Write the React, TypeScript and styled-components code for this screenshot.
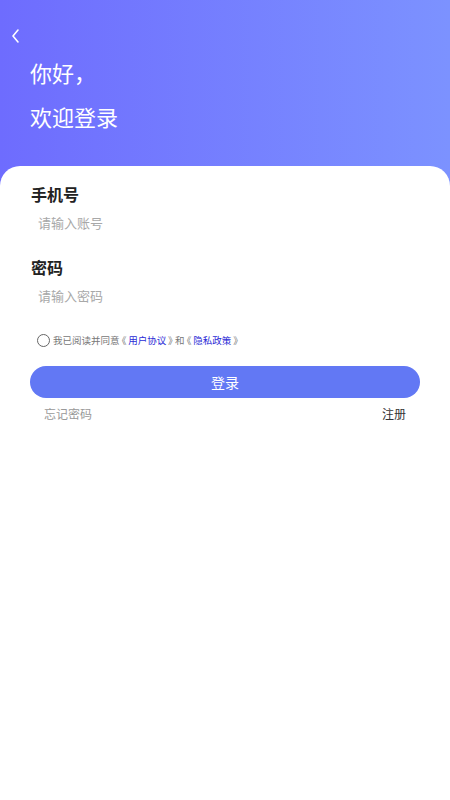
import React, { ReactElement } from "react";
import styled, { createGlobalStyle } from "styled-components";

const GlobalStyle = createGlobalStyle`
  html, body {
    margin: 0;
    padding: 0;
    background: #ffffff;
  }
  body {
    font-family: "Noto Sans CJK SC", "Noto Sans", sans-serif;
  }
`;

const Page = styled.div`
  width: 450px;
  min-height: 800px;
  background: #ffffff;
  display: flex;
  flex-direction: column;
`;

const Header = styled.div`
  height: 186px;
  background: linear-gradient(90deg, #6e6cfe 0%, #7c92ff 100%);
  padding: 26px 0 0 0;
  box-sizing: border-box;
  display: flex;
  flex-direction: column;
`;

const BackButton = styled.div`
  width: 20px;
  height: 20px;
  margin-left: 5px;
  display: flex;
  align-items: center;
  justify-content: center;
`;

const Greeting = styled.div`
  color: #ffffff;
  font-size: 22px;
  line-height: 30px;
  margin-left: 30px;
  margin-top: ${(p: { $top: number }) => p.$top}px;
`;

const Card = styled.div`
  flex: 1;
  margin-top: -20px;
  background: #ffffff;
  border-radius: 20px 20px 0 0;
  padding: 17px 30px 0 30px;
  display: flex;
  flex-direction: column;
`;

const Label = styled.div`
  font-size: 16px;
  font-weight: bold;
  color: #222222;
  line-height: 22px;
  margin-left: 1px;
  margin-top: ${(p: { $top: number }) => p.$top}px;
`;

const Field = styled.div`
  margin-left: 8px;
  height: 34px;
  display: flex;
  align-items: center;
  font-size: 13px;
  color: #a8a8a8;
`;

const Agreement = styled.div`
  display: flex;
  align-items: center;
  margin-top: 22px;
  margin-left: 7px;
  font-size: 9.5px;
  line-height: 13px;
  color: #777777;
  font-feature-settings: "palt";
`;

const Radio = styled.span`
  width: 11px;
  height: 11px;
  border: 1px solid #666666;
  border-radius: 50%;
  margin-right: 3px;
`;

const Link = styled.span`
  color: #2b2bd6;
`;

const Plain = styled.span`
  margin: 0 2px;
`;

const LoginButton = styled.div`
  margin-top: 19px;
  height: 32px;
  border-radius: 16px;
  background: #6278f4;
  color: #ffffff;
  font-size: 14px;
  display: flex;
  align-items: center;
  justify-content: center;
`;

const BottomRow = styled.div`
  display: flex;
  justify-content: space-between;
  padding: 0 14px 0 14px;
  margin-top: 6px;
  font-size: 12px;
  line-height: 20px;
`;

const Muted = styled.span`
  color: #999999;
`;

const Dark = styled.span`
  color: #333333;
`;

function App(): ReactElement {
  return (
    <Page>
      <GlobalStyle />
      <Header>
        <BackButton>
          <svg width="10" height="16" viewBox="0 0 10 16">
            <path
              d="M8 2 L3 8 L8 14"
              fill="none"
              stroke="#ffffff"
              strokeWidth="1.6"
              strokeLinecap="round"
              strokeLinejoin="round"
            />
          </svg>
        </BackButton>
        <Greeting $top={11}>你好，</Greeting>
        <Greeting $top={14}>欢迎登录</Greeting>
      </Header>
      <Card>
        <Label $top={0}>手机号</Label>
        <Field>请输入账号</Field>
        <Label $top={17}>密码</Label>
        <Field>请输入密码</Field>
        <Agreement>
          <Radio />
          <span>我已阅读并同意</span>
          <Plain>《</Plain>
          <Link>用户协议</Link>
          <Plain>》</Plain>
          <span>和</span>
          <Plain>《</Plain>
          <Link>隐私政策</Link>
          <Plain>》</Plain>
        </Agreement>
        <LoginButton>登录</LoginButton>
        <BottomRow>
          <Muted>忘记密码</Muted>
          <Dark>注册</Dark>
        </BottomRow>
      </Card>
    </Page>
  );
}

export default App;
